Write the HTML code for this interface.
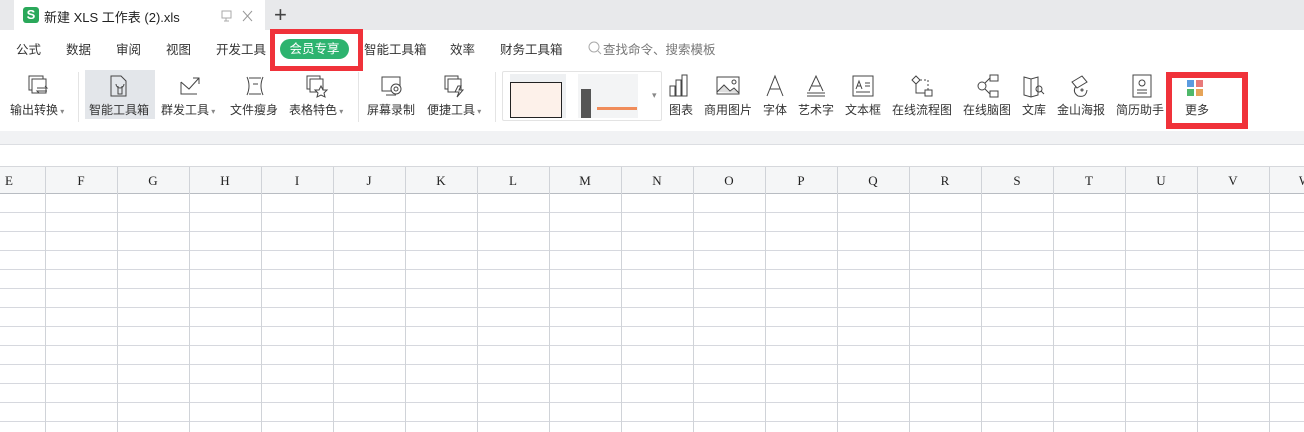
<!DOCTYPE html>
<html><head><meta charset="utf-8"><style>
*{margin:0;padding:0;box-sizing:border-box}
body{width:1304px;height:432px;overflow:hidden;background:#fff;font-family:"Liberation Sans","Noto Sans CJK SC",sans-serif;font-size:12px;color:#333;position:relative}
.a{position:absolute}
.menu{top:39px;font-size:12.5px;color:#333}
.lbl{top:101px;font-size:12px;color:#333;white-space:nowrap}
.ic{position:absolute;top:74px}
.col{position:absolute;top:167px;height:27px;line-height:27px;font-family:"Liberation Serif",serif;font-size:13px;color:#222;text-align:center;width:72px}
.vl{position:absolute;top:167px;bottom:0;width:1px;background:#d0d3d8}
</style></head><body>
<div class="a" style="left:0;top:0;width:1304px;height:30px;background:#e8e9eb"></div>
<div class="a" style="left:14px;top:0;width:251px;height:30px;background:#fff"></div>
<div class="a" style="left:23px;top:7px;width:16px;height:16px;background:#2aa85a;border-radius:3px;color:#fff;font-weight:bold;font-size:13px;line-height:16px;text-align:center">S</div>
<div class="a" style="left:44px;top:7px;font-size:13px;color:#222">新建 XLS 工作表 (2).xls</div>
<svg class="a" style="left:220px;top:9px" width="40" height="14"><rect x="2" y="2" width="9" height="7" fill="none" stroke="#aaa"/><path d="M6 9v3M4 12h5" stroke="#aaa"/><path d="M23 2l9 10M32 2l-9 10" stroke="#999"/></svg>
<div class="a" style="left:274px;top:2px;font-size:22px;color:#444">+</div>

<div class="a menu" style="left:16px">公式</div>
<div class="a menu" style="left:66px">数据</div>
<div class="a menu" style="left:116px">审阅</div>
<div class="a menu" style="left:166px">视图</div>
<div class="a menu" style="left:216px">开发工具</div>
<div class="a" style="left:280px;top:39px;width:69px;height:20px;border-radius:10px;background:#2db36f;color:#fff;font-size:12.5px;line-height:20px;text-align:center">会员专享</div>
<div class="a" style="left:270px;top:29px;width:93px;height:42px;border:5px solid #f0323a"></div>
<div class="a menu" style="left:364px">智能工具箱</div>
<div class="a menu" style="left:450px">效率</div>
<div class="a menu" style="left:500px">财务工具箱</div>
<svg class="a" style="left:588px;top:41px" width="14" height="14"><circle cx="6" cy="6" r="5" fill="none" stroke="#aaa"/><path d="M10 10l3 3" stroke="#aaa"/></svg>
<div class="a menu" style="left:603px;color:#777">查找命令、搜索模板</div>

<div class="a" style="left:85px;top:70px;width:70px;height:49px;background:#e3e6ea"></div>
<div class="a lbl" style="left:10px">输出转换<span style="font-size:8px;color:#888"> ▾</span></div>
<div class="a lbl" style="left:89px">智能工具箱</div>
<div class="a lbl" style="left:161px">群发工具<span style="font-size:8px;color:#888"> ▾</span></div>
<div class="a lbl" style="left:230px">文件瘦身</div>
<div class="a lbl" style="left:289px">表格特色<span style="font-size:8px;color:#888"> ▾</span></div>
<div class="a lbl" style="left:367px">屏幕录制</div>
<div class="a lbl" style="left:427px">便捷工具<span style="font-size:8px;color:#888"> ▾</span></div>
<div class="a" style="left:78px;top:72px;width:1px;height:50px;background:#e4e4e4"></div>
<div class="a" style="left:358px;top:72px;width:1px;height:50px;background:#e4e4e4"></div>
<div class="a" style="left:495px;top:72px;width:1px;height:50px;background:#e4e4e4"></div>
<svg class="ic" style="left:27px" width="24" height="24" fill="none" stroke="#444"><rect x="2" y="2" width="14" height="14"/><rect x="5" y="5" width="14" height="14" fill="#fff"/><path d="M10 14h10l-2-2M20 17H10l2 2"/></svg>
<svg class="ic" style="left:108px" width="24" height="24" fill="none" stroke="#444"><path d="M3 2h10l5 5v15H3z"/><path d="M10 12v8h4v-8M8 10a4 4 0 0 0 8 0"/></svg>
<svg class="ic" style="left:178px" width="24" height="24" fill="none" stroke="#444"><path d="M3 8v12h16M3 8l8 7 10-11M15 4h6v6"/></svg>
<svg class="ic" style="left:243px" width="24" height="24" fill="none" stroke="#444"><path d="M4 3q4 9 0 18M20 3q-4 9 0 18M6 4h12M6 20h12M10 10h5"/></svg>
<svg class="ic" style="left:305px" width="24" height="24" fill="none" stroke="#444"><rect x="2" y="2" width="13" height="13"/><rect x="5" y="5" width="13" height="13" fill="#fff"/><path d="M16 12l2 4h4l-3 3 1 4-4-2-4 2 1-4-3-3h4z" fill="#fff"/></svg>
<svg class="ic" style="left:380px" width="24" height="24" fill="none" stroke="#444"><rect x="2" y="3" width="18" height="14"/><path d="M6 21h10"/><circle cx="16" cy="15" r="5" fill="#fff"/><circle cx="16" cy="15" r="2"/></svg>
<svg class="ic" style="left:443px" width="24" height="24" fill="none" stroke="#444"><rect x="2" y="2" width="13" height="13"/><rect x="5" y="5" width="13" height="13" fill="#fff"/><path d="M15 12l-3 6h4l-2 5 6-7h-4l2-4z" fill="#fff"/></svg>

<div class="a" style="left:502px;top:71px;width:160px;height:50px;border:1px solid #e3e3e3;border-radius:2px"></div>
<div class="a" style="left:510px;top:74px;width:56px;height:44px;background:#eef0f2"></div>
<div class="a" style="left:510px;top:82px;width:52px;height:36px;background:#fdf1ea;border:1px solid #222"></div>
<div class="a" style="left:578px;top:74px;width:60px;height:44px;background:#f3f4f5"></div>
<div class="a" style="left:581px;top:89px;width:10px;height:29px;background:#555"></div>
<div class="a" style="left:597px;top:107px;width:40px;height:3px;background:#f08c5a"></div>
<div class="a" style="left:652px;top:90px;color:#888;font-size:9px">▾</div>

<div class="a lbl" style="left:669px">图表</div>
<div class="a lbl" style="left:704px">商用图片</div>
<div class="a lbl" style="left:763px">字体</div>
<div class="a lbl" style="left:798px">艺术字</div>
<div class="a lbl" style="left:845px">文本框</div>
<div class="a lbl" style="left:892px">在线流程图</div>
<div class="a lbl" style="left:963px">在线脑图</div>
<div class="a lbl" style="left:1022px">文库</div>
<div class="a lbl" style="left:1057px">金山海报</div>
<div class="a lbl" style="left:1116px">简历助手</div>
<div class="a lbl" style="left:1185px">更多</div>
<svg class="ic" style="left:668px" width="24" height="24" fill="none" stroke="#444"><rect x="2" y="12" width="5" height="10"/><rect x="8" y="6" width="5" height="16"/><rect x="14" y="1" width="5" height="21"/></svg>
<svg class="ic" style="left:715px" width="26" height="24" fill="none" stroke="#444"><rect x="2" y="3" width="22" height="17"/><path d="M2 18l7-7 6 6 4-3 5 5" fill="#ddd"/><circle cx="19" cy="8" r="2"/></svg>
<svg class="ic" style="left:763px" width="24" height="24" fill="none" stroke="#444"><path d="M4 22L12 2l8 20M7 15h10"/></svg>
<svg class="ic" style="left:804px" width="24" height="24" fill="none" stroke="#444"><path d="M5 17L12 2l7 15M8 12h8M3 19h18M3 22h18"/></svg>
<svg class="ic" style="left:851px" width="24" height="24" fill="none" stroke="#444"><rect x="2" y="2" width="20" height="20"/><path d="M5 15l3-8 3 8M6 12h4M14 9h5M14 12h5M5 18h14"/></svg>
<svg class="ic" style="left:910px" width="26" height="24" fill="none" stroke="#444"><path d="M6 2l4 4-4 4-4-4z"/><path d="M10 6h8v10" stroke-dasharray="2 2"/><rect x="15" y="16" width="7" height="6"/><path d="M6 10v9h9"/></svg>
<svg class="ic" style="left:975px" width="26" height="24" fill="none" stroke="#444"><circle cx="7" cy="12" r="4"/><rect x="15" y="1" width="8" height="6"/><rect x="15" y="17" width="8" height="6"/><path d="M10 9l5-5M10 15l5 5"/></svg>
<svg class="ic" style="left:1022px" width="26" height="24" fill="none" stroke="#444"><path d="M2 3l7 2 7-2v18l-7 2-7-2zM9 5v18"/><circle cx="17" cy="15" r="3"/><path d="M19 17l3 3"/></svg>
<svg class="ic" style="left:1068px" width="26" height="24" fill="none" stroke="#444"><path d="M4 8l10-6 5 6-10 6zM8 12q-4 6 2 10 8 2 9-6"/><circle cx="14" cy="16" r="1"/></svg>
<svg class="ic" style="left:1130px" width="24" height="24" fill="none" stroke="#444"><rect x="3" y="1" width="18" height="22"/><circle cx="12" cy="9" r="3"/><path d="M7 16h10M7 19h10"/></svg>
<div class="a" style="left:1187px;top:80px;width:7px;height:7px;background:#5b9be0"></div>
<div class="a" style="left:1196px;top:80px;width:7px;height:7px;background:#e87a7a"></div>
<div class="a" style="left:1187px;top:89px;width:7px;height:7px;background:#4fb86a"></div>
<div class="a" style="left:1196px;top:89px;width:7px;height:7px;background:#e6a458"></div>
<div class="a" style="left:1166px;top:72px;width:82px;height:57px;border:6px solid #f0323a"></div>

<div class="a" style="left:0;top:131px;width:1304px;height:14px;background:#f1f2f4;border-bottom:1px solid #dcdee2"></div>
<div class="a" style="left:0;top:166px;width:1304px;height:28px;background:#f5f6f7;border-top:1px solid #d6d8dc;border-bottom:1px solid #b8bcc2"></div>
<div class="a" style="left:0;top:194px;width:1304px;height:238px;background:repeating-linear-gradient(to bottom,#fff 0,#fff 18px,#d6d8de 18px,#d6d8de 19px)"></div>
<div class="col" style="left:-27px">E</div><div class="col" style="left:45px">F</div><div class="col" style="left:117px">G</div><div class="col" style="left:189px">H</div><div class="col" style="left:261px">I</div><div class="col" style="left:333px">J</div><div class="col" style="left:405px">K</div><div class="col" style="left:477px">L</div><div class="col" style="left:549px">M</div><div class="col" style="left:621px">N</div><div class="col" style="left:693px">O</div><div class="col" style="left:765px">P</div><div class="col" style="left:837px">Q</div><div class="col" style="left:909px">R</div><div class="col" style="left:981px">S</div><div class="col" style="left:1053px">T</div><div class="col" style="left:1125px">U</div><div class="col" style="left:1197px">V</div><div class="col" style="left:1269px">W</div>
<div class="vl" style="left:45px"></div><div class="vl" style="left:117px"></div><div class="vl" style="left:189px"></div><div class="vl" style="left:261px"></div><div class="vl" style="left:333px"></div><div class="vl" style="left:405px"></div><div class="vl" style="left:477px"></div><div class="vl" style="left:549px"></div><div class="vl" style="left:621px"></div><div class="vl" style="left:693px"></div><div class="vl" style="left:765px"></div><div class="vl" style="left:837px"></div><div class="vl" style="left:909px"></div><div class="vl" style="left:981px"></div><div class="vl" style="left:1053px"></div><div class="vl" style="left:1125px"></div><div class="vl" style="left:1197px"></div><div class="vl" style="left:1269px"></div>
</body></html>
